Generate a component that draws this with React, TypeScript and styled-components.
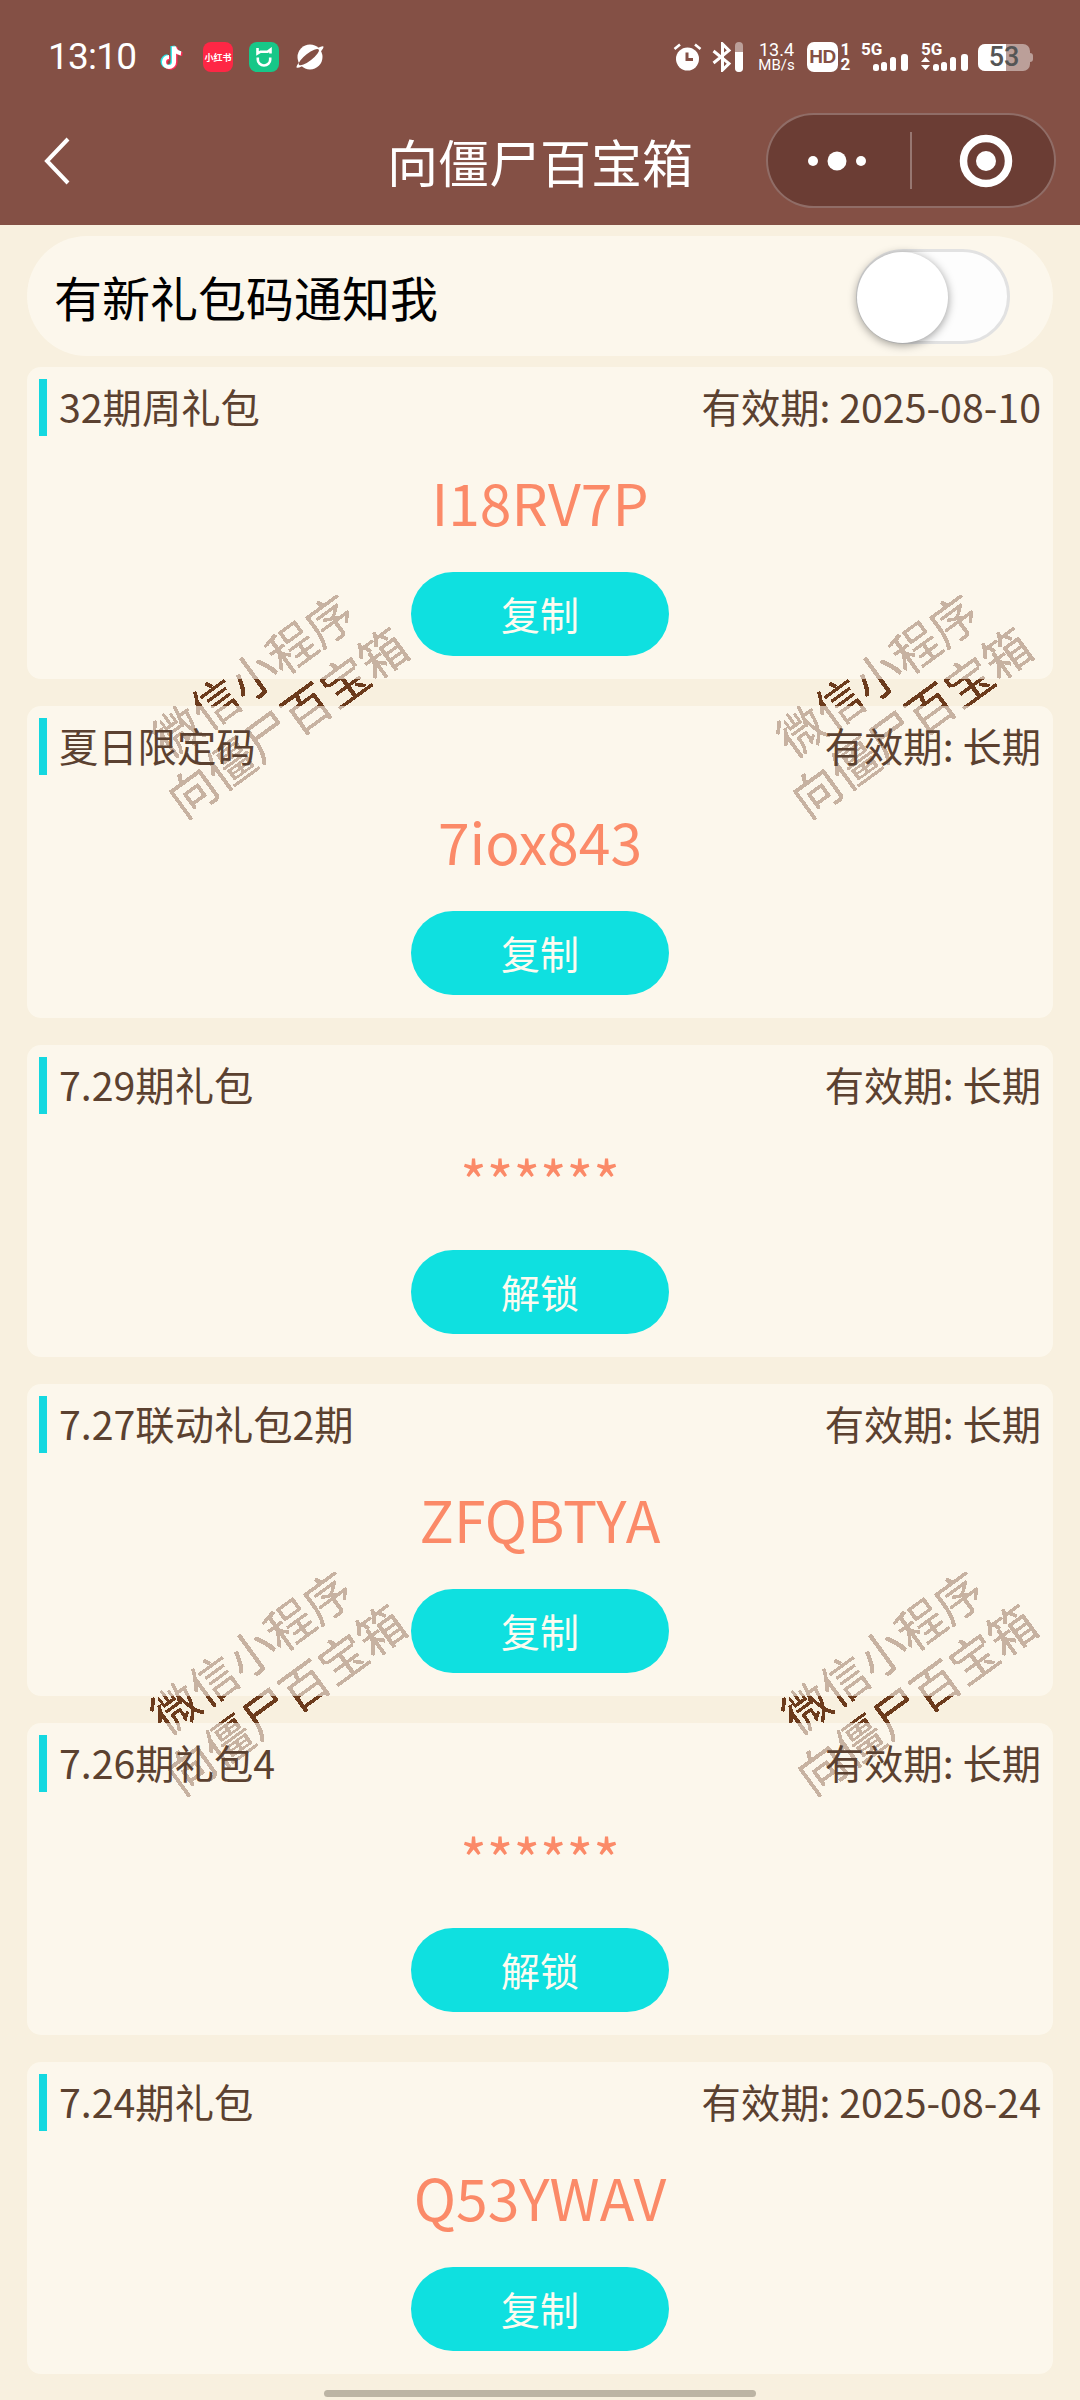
import React, { FC } from "react";
import styled, { createGlobalStyle } from "styled-components";

interface iGift {
  id: number;
  title: string;
  expire: string;
  code: string;
  locked?: boolean;
}

const gifts: iGift[] = [
  { id: 1, title: "32期周礼包", expire: "2025-08-10", code: "I18RV7P" },
  { id: 2, title: "夏日限定码", expire: "长期", code: "7iox843" },
  { id: 3, title: "7.29期礼包", expire: "长期", code: "******", locked: true },
  { id: 4, title: "7.27联动礼包2期", expire: "长期", code: "ZFQBTYA" },
  { id: 5, title: "7.26期礼包4", expire: "长期", code: "******", locked: true },
  { id: 6, title: "7.24期礼包", expire: "2025-08-24", code: "Q53YWAV" },
];

const marks = [
  { x: 269, y: 697 },
  { x: 893, y: 697 },
  { x: 267, y: 1674 },
  { x: 898, y: 1674 },
];

const HEADER = "#845045";

const TikTok = () => {
  const note = "M14 2.5v15.5a5 5 0 1 1-5-5M14 2.5c.7 4 3.3 6.3 7 6.8";
  return (
    <svg width="27" height="30" viewBox="0 0 27 30" fill="none" strokeWidth="4.2">
      <g transform="translate(0 2)">
        <path d={note} stroke="#25e6ea" transform="translate(-1.4 -.6)" />
        <path d={note} stroke="#fe2c55" transform="translate(1.4 .8)" />
        <path d={note} stroke="#fff" />
      </g>
    </svg>
  );
};

const MiHome = () => (
  <svg width="16" height="20" viewBox="0 0 16 20" fill="none" stroke="#fff" strokeWidth="2.6">
    <path d="M1.5 1v5.5l3-1.8h7l3-2.2v4" />
    <path d="M1.8 10.5v2.2a6.2 5.8 0 0 0 12.4 0v-2.2" />
  </svg>
);

const Planet = () => (
  <svg width="30" height="30" viewBox="0 0 30 30">
    <circle cx="15" cy="15" r="12.5" fill="#fff" />
    <g transform="rotate(-38 15 15)">
      <ellipse cx="15" cy="15" rx="17" ry="3.2" fill="#fff" />
      <ellipse cx="14" cy="14.4" rx="12.5" ry="3.6" fill={HEADER} />
    </g>
  </svg>
);

const Alarm = () => (
  <svg width="29" height="30" viewBox="0 0 29 30">
    <circle cx="14.5" cy="17" r="11.5" fill="#fff" />
    <path d="M14 10.5v7h6" fill="none" stroke={HEADER} strokeWidth="3" />
    <path d="M1.5 7 7 2.5M27.5 7 22 2.5" stroke="#fff" strokeWidth="2.6" />
  </svg>
);

const Bluetooth = () => (
  <svg width="31" height="30" viewBox="0 0 31 30">
    <path d="M1.5 9 17 21.5 10.5 28V2L17 8.5 1.5 21" fill="none" stroke="#fff" strokeWidth="3" />
    <rect x="23" y="0" width="8" height="30" rx="4" fill="#fff" opacity="0.45" />
    <path d="M23 10h8v16a4 4 0 0 1-8 0z" fill="#fff" />
  </svg>
);

const Signal: FC<{ arrows?: boolean }> = ({ arrows }) => (
  <SignalBox>
    <SignalText>5G</SignalText>
    <svg width="47" height="30" viewBox="0 0 47 30" fill="#fff">
      {arrows && <path d="M4.5 15 9 20H0zM0 23h9l-4.5 5z" />}
      <rect x="12" y="22" width="6" height="7" rx="2.5" />
      <rect x="20" y="20" width="6" height="9" rx="2.5" />
      <rect x="29" y="15" width="6" height="14" rx="2.5" />
      <rect x="40" y="12" width="7" height="17" rx="3" />
    </svg>
  </SignalBox>
);

const Dots = () => (
  <svg width="58" height="20" viewBox="0 0 58 20" fill="#fff">
    <circle cx="5" cy="10" r="5" />
    <circle cx="29" cy="10" r="9.5" />
    <circle cx="53" cy="10" r="5" />
  </svg>
);

const Record = () => (
  <svg width="54" height="54" viewBox="0 0 54 54">
    <circle cx="27" cy="27" r="22.5" fill="none" stroke="#fff" strokeWidth="7.5" />
    <circle cx="27" cy="27" r="10" fill="#fff" />
  </svg>
);

const App = () => {
  return (
    <Page>
      <GlobalStyle />

      <svg width="0" height="0" aria-hidden="true" style={{ position: "absolute" }}>
        <filter id="aliased">
          <feComponentTransfer>
            <feFuncA type="discrete" tableValues="0 1 1" />
          </feComponentTransfer>
        </filter>
      </svg>

      {marks.map((m) => (
        <Watermark key={m.x + m.y} $x={m.x} $y={m.y}>
          <div>微信小程序</div>
          <div>向僵尸百宝箱</div>
        </Watermark>
      ))}

      <Header>
        <StatusBar>
          <StatusLeft>
            <Time>13:10</Time>
            <TikTok />
            <AppIcon $bg="#fe2745">
              <RedText>小红书</RedText>
            </AppIcon>
            <AppIcon $bg="#17c788">
              <MiHome />
            </AppIcon>
            <Planet />
          </StatusLeft>
          <StatusRight>
            <Alarm />
            <Bluetooth />
            <Speed>
              <SpeedNum>13.4</SpeedNum>
              <SpeedUnit>MB/s</SpeedUnit>
            </Speed>
            <HdGroup>
              <HdBox>HD</HdBox>
              <HdSlots>
                <HdSlot>1</HdSlot>
                <HdSlot>2</HdSlot>
              </HdSlots>
            </HdGroup>
            <Signal />
            <SignalGap>
              <Signal arrows />
            </SignalGap>
            <Battery>
              <BatteryFill style={{ width: "53%" }} />
              <BatteryText>53</BatteryText>
            </Battery>
          </StatusRight>
        </StatusBar>

        <Nav>
          <BackBtn>
            <svg width="26" height="48" viewBox="0 0 26 48" fill="none">
              <path d="M24 2 3 24l21 22" stroke="#fff" strokeWidth="4" />
            </svg>
          </BackBtn>
          <NavTitle>向僵尸百宝箱</NavTitle>
          <NavRight>
            <Capsule>
              <MenuSide>
                <Dots />
              </MenuSide>
              <CapsuleLine />
              <CloseSide>
                <Record />
              </CloseSide>
            </Capsule>
          </NavRight>
        </Nav>
      </Header>

      <Content>
        <NotifyRow>
          <NotifyText>有新礼包码通知我</NotifyText>
          <Switch>
            <Knob />
          </Switch>
        </NotifyRow>

        <List>
          {gifts.map((g) => (
            <Card key={g.id}>
              <CardHead>
                <CardTitle>{g.title}</CardTitle>
                <CardDate>有效期: {g.expire}</CardDate>
              </CardHead>
              <CodeBox>
                <Code>{g.code}</Code>
              </CodeBox>
              <ActionBtn>{g.locked ? "解锁" : "复制"}</ActionBtn>
            </Card>
          ))}
        </List>
      </Content>

      <HomeBar />
    </Page>
  );
};

export default App;

const GlobalStyle = createGlobalStyle`
  html, body {
    margin: 0;
    padding: 0;
    background: #f8f0df;
  }
  * {
    box-sizing: border-box;
  }
  body {
    font-family: "Noto Sans CJK SC", "Noto Sans", sans-serif;
  }
`;

const Page = styled.div`
  position: relative;
  width: 1080px;
  height: 2400px;
  overflow: hidden;
  background: #f8f0df;
`;

const Watermark = styled.div<{ $x: number; $y: number }>`
  position: absolute;
  left: ${(p) => p.$x}px;
  top: ${(p) => p.$y}px;
  transform: translate(-50%, -50%) rotate(-36deg);
  filter: url(#aliased);
  color: #6c3a1f;
  font-size: 47px;
  font-weight: 400;
  line-height: 58px;
  text-align: center;
  white-space: nowrap;
`;

const Header = styled.div`
  position: relative;
  height: 225px;
  background: ${HEADER};
`;

const StatusBar = styled.div`
  display: flex;
  justify-content: space-between;
  align-items: center;
  height: 96px;
  padding: 42px 47px 24px 48px;
`;

const StatusLeft = styled.div`
  display: flex;
  align-items: center;
  gap: 16px;
`;

const Time = styled.div`
  width: 88px;
  margin-right: 8px;
  color: #fff;
  font-family: Roboto, sans-serif;
  font-size: 37px;
  line-height: 30px;
  letter-spacing: -0.8px;
  white-space: nowrap;
`;

const AppIcon = styled.div<{ $bg: string }>`
  display: flex;
  align-items: center;
  justify-content: center;
  width: 30px;
  height: 30px;
  border-radius: 8px;
  background: ${(p) => p.$bg};
`;

const RedText = styled.span`
  color: #fff;
  font-size: 9px;
  font-weight: 700;
  line-height: 1;
  white-space: nowrap;
`;

const StatusRight = styled.div`
  display: flex;
  align-items: center;
  gap: 10px;
  color: #fff;
`;

const Speed = styled.div`
  display: flex;
  flex-direction: column;
  align-items: center;
  justify-content: space-between;
  width: 39px;
  height: 30px;
  margin: 0 1px 0 4px;
  font-family: Roboto, sans-serif;
  white-space: nowrap;
`;

const SpeedNum = styled.div`
  font-size: 18px;
  line-height: 15px;
`;

const SpeedUnit = styled.div`
  font-size: 15px;
  line-height: 13px;
`;

const HdGroup = styled.div`
  display: flex;
  align-items: center;
  gap: 2px;
  height: 30px;
`;

const HdBox = styled.div`
  width: 31px;
  height: 30px;
  border-radius: 7px;
  background: #fff;
  color: ${HEADER};
  font-family: "Liberation Sans", sans-serif;
  font-size: 19px;
  font-weight: 700;
  line-height: 30px;
  text-align: center;
  letter-spacing: -0.5px;
`;

const HdSlots = styled.div`
  display: flex;
  flex-direction: column;
  align-items: center;
  width: 11px;
  font-family: Roboto, sans-serif;
  font-size: 17px;
  font-weight: 700;
`;

const HdSlot = styled.div`
  height: 15px;
  line-height: 15px;
`;

const SignalBox = styled.div`
  position: relative;
  width: 47px;
  height: 30px;

  svg {
    display: block;
  }
`;

const SignalText = styled.div`
  position: absolute;
  left: 0;
  top: 1px;
  font-family: Roboto, sans-serif;
  font-size: 17px;
  font-weight: 700;
  line-height: 13px;
`;

const SignalGap = styled.div`
  display: flex;
  margin: 0 0 0 3px;
`;

const Battery = styled.div`
  position: relative;
  width: 52px;
  height: 27px;
  margin-right: 3px;
  border-radius: 7px;
  background: rgba(255, 255, 255, 0.45);

  &::after {
    content: "";
    position: absolute;
    right: -3px;
    top: 9px;
    width: 3px;
    height: 9px;
    border-radius: 0 3px 3px 0;
    background: rgba(255, 255, 255, 0.45);
  }
`;

const BatteryFill = styled.div`
  height: 100%;
  border-radius: 7px 0 0 7px;
  background: #fff;
`;

const BatteryText = styled.div`
  position: absolute;
  inset: 0;
  color: #555;
  font-family: Roboto, sans-serif;
  font-size: 27px;
  font-weight: 500;
  line-height: 27px;
  text-align: center;
`;

const Nav = styled.div`
  display: grid;
  grid-template-columns: 1fr auto 1fr;
  align-items: center;
  height: 129px;
`;

const BackBtn = styled.div`
  display: flex;
  padding-left: 44px;
`;

const NavTitle = styled.div`
  color: #fff;
  font-size: 51px;
  line-height: 60px;
`;

const NavRight = styled.div`
  display: flex;
  justify-content: flex-end;
  padding-right: 24px;
`;

const Capsule = styled.div`
  display: flex;
  align-items: center;
  width: 290px;
  height: 95px;
  border: 2px solid rgba(255, 255, 255, 0.25);
  border-radius: 48px;
  background: #6b3d34;
`;

const MenuSide = styled.div`
  display: flex;
  flex: none;
  justify-content: center;
  width: 142px;
  padding-right: 4px;
`;

const CloseSide = styled.div`
  display: flex;
  flex: 1;
  justify-content: center;
  padding-left: 5px;
`;

const CapsuleLine = styled.div`
  width: 2px;
  height: 57px;
  background: rgba(255, 255, 255, 0.3);
`;

const Content = styled.div`
  position: relative;
  padding: 11px 27px 0;
`;

const NotifyRow = styled.div`
  display: flex;
  justify-content: space-between;
  align-items: center;
  height: 120px;
  padding: 0 43px 0 27px;
  border-radius: 60px;
  background: rgba(255, 252, 244, 0.62);
`;

const NotifyText = styled.div`
  color: #000;
  font-size: 48px;
  line-height: 60px;
`;

const Switch = styled.div`
  position: relative;
  width: 154px;
  height: 95px;
  border: 3px solid #e2e2e2;
  border-radius: 48px;
  background: #fdfdfd;
`;

const Knob = styled.div`
  position: absolute;
  left: -2px;
  top: 0;
  width: 91px;
  height: 91px;
  border-radius: 50%;
  background: #fff;
  box-shadow: 0 2px 10px rgba(0, 0, 0, 0.4);
`;

const List = styled.div`
  display: flex;
  flex-direction: column;
  gap: 27px;
  margin-top: 11px;
`;

const Card = styled.div`
  display: flex;
  flex-direction: column;
  align-items: center;
  height: 312px;
  padding: 12px 12px 23px 12px;
  border-radius: 14px;
  background: rgba(255, 252, 244, 0.62);
`;

const CardHead = styled.div`
  display: flex;
  justify-content: space-between;
  align-items: center;
  align-self: stretch;
  height: 57px;
  padding: 0 0 3px 12px;
  border-left: 8px solid #14d8e0;
  color: #5b4130;
  font-size: 39.3px;
`;

const CardTitle = styled.div`
  line-height: 54px;
`;

const CardDate = styled.div`
  line-height: 54px;
`;

const CodeBox = styled.div`
  display: flex;
  flex: 1;
  align-items: center;
  justify-content: center;
  padding-bottom: 6px;
`;

const Code = styled.div`
  color: #fb8a68;
  font-size: 57px;
  line-height: 80px;
`;

const ActionBtn = styled.button`
  flex: none;
  width: 258px;
  height: 84px;
  padding: 0 0 2px;
  border: 0;
  border-radius: 42px;
  background: #0fe0e0;
  color: #fdfbf0;
  font-family: inherit;
  font-size: 39px;
`;

const HomeBar = styled.div`
  position: absolute;
  left: 324px;
  top: 2390px;
  width: 432px;
  height: 7px;
  border-radius: 4px;
  background: #bcb4a4;
`;
